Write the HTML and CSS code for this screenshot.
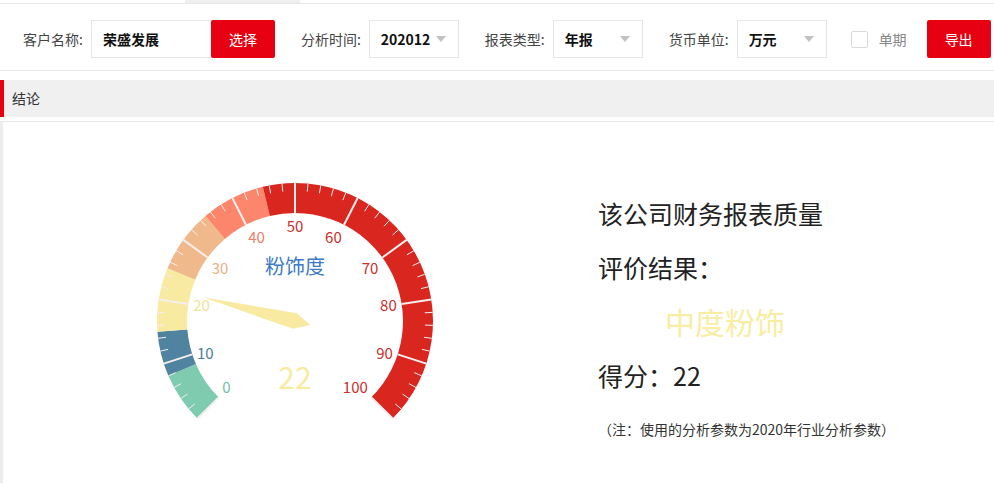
FILE: index.html
```html
<!DOCTYPE html>
<html lang="zh-CN">
<head>
  <meta charset="UTF-8">
  <title>财务报表粉饰分析 - 结论</title>
  <link rel="stylesheet" href="styles.css">
</head>
<body>

  <!-- タブ -->
  <div class="tabbar"><span class="tab"></span></div>

  <!-- 検索条件 -->
  <div class="toolbar">
    <span class="label">客户名称:</span>
    <div class="input-box">荣盛发展</div>
    <button class="red-btn" type="button">选择</button>

    <span class="label gap">分析时间:</span>
    <div class="select-box"><b>202012</b><i class="arrow"></i></div>

    <span class="label gap">报表类型:</span>
    <div class="select-box"><b>年报</b><i class="arrow"></i></div>

    <span class="label gap">货币单位:</span>
    <div class="select-box"><b>万元</b><i class="arrow"></i></div>

    <span class="check"></span>
    <span class="check-text">单期</span>
    <button class="red-btn export" type="button">导出</button>
  </div>

  <!-- 結論 -->
  <div class="section-title">结论</div>

  <div class="conclusion">
    <div class="gauge-box">
      <svg id="gauge" width="590" height="300" viewBox="0 0 590 300"></svg>
    </div>
    <div class="result">
      <p>该公司财务报表质量</p>
      <p>评价结果：</p>
      <p class="level">中度粉饰</p>
      <p>得分：22</p>
      <p class="note">（注：使用的分析参数为2020年行业分析参数）</p>
    </div>
  </div>

  <script src="script.js"></script>
</body>
</html>
```

FILE: styles.css
```css
    /* リセット */
    *, *::before, *::after { box-sizing:border-box; }
    html, body { margin:0; padding:0; }
    body {
      font-family:"Noto Sans CJK SC","Liberation Sans",sans-serif;
      font-size:14px; color:#333; background:#fff;
      overflow:hidden;
    }

    /* 上部タブ */
    .tabbar { height:4px; border-bottom:1px solid #e6e6e6; }
    .tab { display:block; width:115px; height:3px; margin-left:185px; background:#efefef; }

    /* 検索条件バー */
    .toolbar {
      display:flex; align-items:center;
      padding:16px 0 12px 23px;
      border-bottom:1px solid #e8e8e8;
    }
    .label { color:#444; margin-right:8px; white-space:nowrap; }
    .label.gap { margin-left:26px; }
    .input-box {
      width:120px; height:38px; line-height:36px;
      padding-left:11px; border:1px solid #e6e6e6; border-right:none;
      font-weight:bold; color:#111;
    }
    .red-btn {
      width:64px; height:38px; border:none; border-radius:2px;
      background:#e60012; color:#fff;
      font-family:inherit; font-size:14px; cursor:pointer;
    }
    .select-box {
      width:90px; height:38px;
      display:flex; align-items:center; justify-content:space-between;
      padding:0 12px 0 11px; border:1px solid #e6e6e6;
      color:#111;
    }
    .arrow {
      width:0; height:0;
      border-left:5px solid transparent; border-right:5px solid transparent;
      border-top:6px solid #c2c2c2;
    }
    .check {
      width:17px; height:17px; margin-left:24px;
      border:1px solid #d9d9d9; border-radius:2px;
    }
    .check-text { margin-left:11px; color:#888; }
    .red-btn.export { margin-left:20px; }

    /* 見出し */
    .section-title {
      margin-top:9px; height:37px; line-height:37px;
      padding-left:8px; background:#f0f0f0;
      border-left:4px solid #e60012; color:#333;
    }

    /* 結論エリア */
    .conclusion {
      display:flex; margin-top:4px; height:362px;
      border-top:1px solid #e8e8e8; border-left:3px solid #ececec;
    }
    .gauge-box { width:590px; padding-top:15px; }
    .gauge-box svg { display:block; }

    .result { flex:1; padding:64px 0 0 5px; }
    .result p { margin:0; font-size:25px; line-height:54px; color:#222; }
    .result .level { font-size:30px; padding-left:67px; color:#f9eda2; }
    .result .note { font-size:14px; color:#333; }
```

FILE: script.js
```js
    // 粉饰度ゲージ（SVG）
    const svg = document.getElementById('gauge');
    const NS  = 'http://www.w3.org/2000/svg';
    const cx = 292, cy = 184, R = 138, W = 30;
    const value = 22;

    // 色の区間（リング色, ラベル色）
    const bands = [
      [8,   '#7fcbb0', '#6fbfa3'],
      [15,  '#4f839f', '#4a7d9a'],
      [25,  '#f8eba1', '#f3e394'],
      [35,  '#efb98b', '#e9b083'],
      [45,  '#fc866b', '#ec8067'],
      [100, '#d9261f', '#c9302b']
    ];

    const rad  = v => (225 - 2.7 * v) * Math.PI / 180;
    const pt   = (r, v) => [cx + r * Math.cos(rad(v)), cy - r * Math.sin(rad(v))];
    const band = v => bands.find(b => v <= b[0]);

    function add(tag, attrs, text) {
      const el = document.createElementNS(NS, tag);
      for (const k in attrs) el.setAttribute(k, attrs[k]);
      if (text !== undefined) el.textContent = text;
      svg.appendChild(el);
      return el;
    }

    // 外周リング
    let from = 0;
    bands.forEach(([to, color]) => {
      const big = (to - from) * 2.7 > 180 ? 1 : 0;
      const [x1, y1] = pt(R, from), [x2, y2] = pt(R, to);
      const [x3, y3] = pt(R - W, to), [x4, y4] = pt(R - W, from);
      add('path', {
        fill: color,
        d: `M${x1} ${y1} A${R} ${R} 0 ${big} 1 ${x2} ${y2} L${x3} ${y3} ` +
           `A${R - W} ${R - W} 0 ${big} 0 ${x4} ${y4} Z`
      });
      from = to;
    });

    // 目盛り
    for (let i = 0; i <= 50; i++) {
      const v = i * 2;
      const major = i % 5 === 0;
      const [x1, y1] = pt(R, v), [x2, y2] = pt(R - (major ? W : 8), v);
      add('line', {
        x1, y1, x2, y2,
        stroke: '#f4eeee', 'stroke-width': major ? 2 : 1
      });
    }

    // 数字ラベル
    for (let v = 0; v <= 100; v += 10) {
      const ux = Math.cos(rad(v)), uy = -Math.sin(rad(v));
      const r = R - W - 5, fs = 15;
      const x = cx + ux * r;
      let y = cy + uy * r;
      const anchor = ux < -0.4 ? 'start' : (ux > 0.4 ? 'end' : 'middle');
      if (uy < -0.4) y += fs / 2;
      else if (uy > 0.4) y -= fs / 2;
      add('text', {
        x, y, 'text-anchor': anchor, 'dominant-baseline': 'central',
        'font-size': fs, fill: band(v === 0 ? 0.1 : v)[2]
      }, v);
    }

    // タイトル・数値
    add('text', {
      x: cx, y: cy - R * 0.4, 'text-anchor': 'middle', 'dominant-baseline': 'central',
      'font-size': 20, fill: '#3b7bc6'
    }, '粉饰度');
    add('text', {
      x: cx, y: cy + R * 0.4, 'text-anchor': 'middle', 'dominant-baseline': 'central',
      'font-size': 30, fill: band(value)[1]
    }, value);

    // 針
    const a = -rad(value), len = 95, w = 8;
    const bx = cx - Math.cos(a) * w * 2, by = cy - Math.sin(a) * w * 2;
    const p = a - Math.PI / 2;
    add('path', {
      fill: band(value)[1],
      d: `M${bx} ${by} L${cx + Math.cos(p) * w} ${cy + Math.sin(p) * w} ` +
         `L${cx + Math.cos(a) * len} ${cy + Math.sin(a) * len} ` +
         `L${cx - Math.cos(p) * w} ${cy - Math.sin(p) * w} Z`
    });
```
